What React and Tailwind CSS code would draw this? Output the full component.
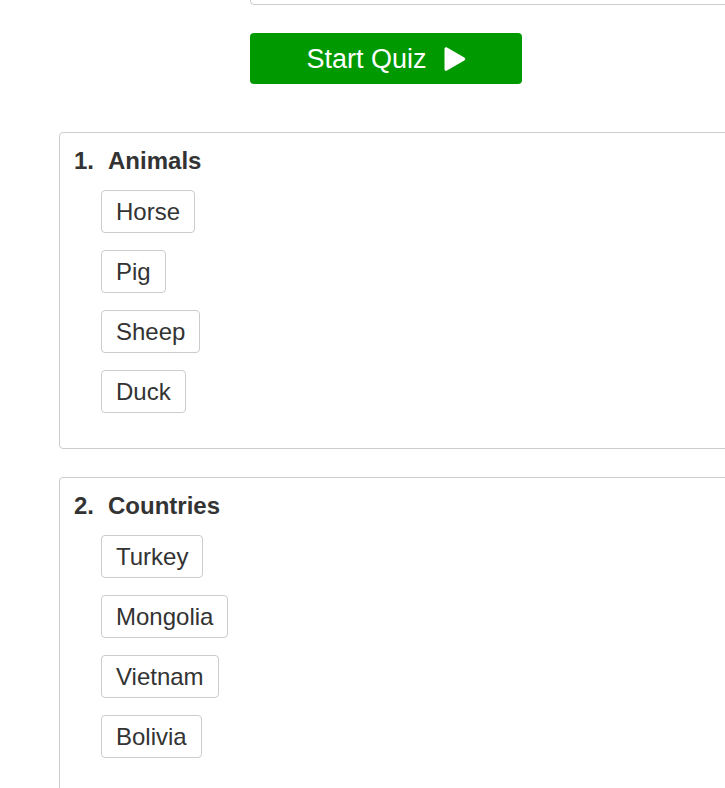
import React from 'react';

const quiz = [
  { title: 'Animals', options: ['Horse', 'Pig', 'Sheep', 'Duck'] },
  { title: 'Countries', options: ['Turkey', 'Mongolia', 'Vietnam', 'Bolivia'] },
];

const PlayIcon = () => (
  <svg width="22" height="26" viewBox="0 0 22 26" className="block">
    <path
      d="M3 1.5 C1.6 0.7 0.5 1.4 0.5 3 L0.5 23 C0.5 24.6 1.6 25.3 3 24.5 L20.3 14.4 C21.6 13.6 21.6 12.4 20.3 11.6 Z"
      fill="#ffffff"
    />
  </svg>
);

const Question = ({ index, title, options }) => (
  <div className="w-[900px] border border-[#cccccc] rounded-[4px] p-[14px] pb-[15px] mb-[28px]">
    <h2 className="flex gap-[14px] h-[28px] items-center text-[24px] leading-[1.15] font-bold text-[#333333]">
      <span>{index}.</span>
      <span>{title}</span>
    </h2>
    <ul className="flex flex-col items-start gap-[17px] mt-[15px] ml-[27px] pb-[20px]">
      {options.map((opt) => (
        <li
          key={opt}
          className="h-[43px] flex items-center border border-[#cccccc] rounded-[4px] px-[14px] text-[24px] leading-[1.15] text-[#333333] bg-white"
        >
          {opt}
        </li>
      ))}
    </ul>
  </div>
);

export default function App() {
  return (
    <div
      className="w-[725px] h-[788px] overflow-hidden bg-white"
      style={{ fontFamily: '"Liberation Sans", Arial, sans-serif' }}
    >
      <div className="ml-[250px]">
        <div className="w-[600px] h-[40px] -mt-[35px] border border-[#cccccc] rounded-[4px] bg-white" />
        <button className="mt-[28px] w-[272px] h-[51px] bg-[#009900] rounded-[4px] flex items-center justify-center gap-[17px] pt-[1px] text-white text-[27px] leading-none">
          <span>Start Quiz</span>
          <PlayIcon />
        </button>
      </div>
      <div className="ml-[59px] mt-[48px]">
        {quiz.map((q, i) => (
          <Question key={q.title} index={i + 1} title={q.title} options={q.options} />
        ))}
      </div>
    </div>
  );
}
